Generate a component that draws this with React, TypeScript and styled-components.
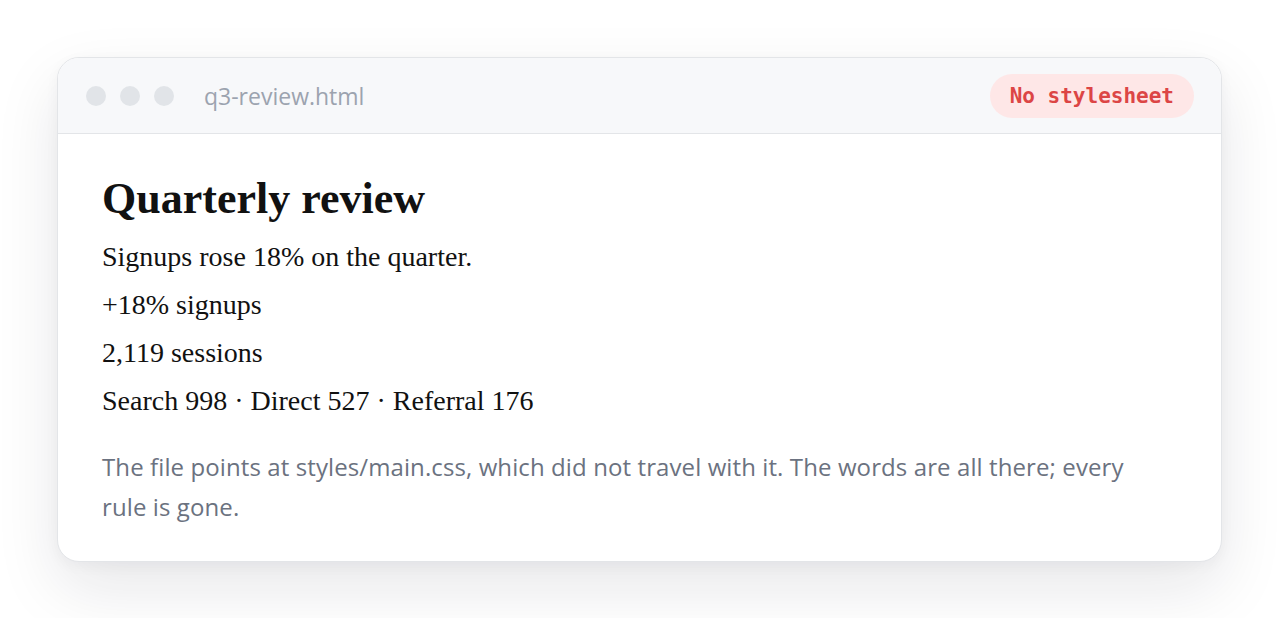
import React from "react";
import styled, { createGlobalStyle } from "styled-components";

const Global = createGlobalStyle`
  html, body { margin: 0; padding: 0; background: #ffffff; }
  body { width: 1280px; height: 618px; overflow: hidden; }
`;

const Stage = styled.div`
  padding: 57px 58px 57px 57px;
  box-sizing: border-box;
  width: 1280px;
  height: 618px;
`;

const Card = styled.div`
  border: 1px solid #e3e5e8;
  border-radius: 22px;
  background: #ffffff;
  overflow: hidden;
  box-shadow: 0 26px 64px rgba(17, 24, 39, 0.1), 0 4px 14px rgba(17, 24, 39, 0.04);
`;

const Bar = styled.div`
  display: flex;
  align-items: center;
  height: 75px;
  padding: 0 27px 0 28px;
  background: #f7f8fa;
  border-bottom: 1px solid #e3e5e8;
`;

const Dots = styled.div`
  display: flex;
  gap: 14px;
  margin-right: 30px;
`;

const Dot = styled.span`
  width: 20px;
  height: 20px;
  border-radius: 50%;
  background: #e1e4e8;
`;

const FileName = styled.span`
  font-family: "Open Sans", "Noto Sans", sans-serif;
  font-size: 23px;
  color: #9ca3af;
  flex: 1;
`;

const Badge = styled.span`
  font-family: "DejaVu Sans Mono", "Liberation Mono", monospace;
  font-weight: bold;
  font-size: 21px;
  color: #dc4545;
  background: #fee7e7;
  border-radius: 22px;
  height: 44px;
  display: flex;
  align-items: center;
  padding: 0 20px;
`;

const Body = styled.div`
  padding: 40px 45px 34px 44px;
  font-family: "Liberation Serif", "Times New Roman", serif;
  color: #111111;
`;

const Title = styled.h1`
  margin: 0 0 8px 0;
  font-size: 44px;
  font-weight: bold;
  line-height: 1.15;
`;

const Line = styled.p`
  margin: 0;
  font-size: 28px;
  line-height: 48px;
`;

const Note = styled.p`
  margin: 22px 0 0 0;
  max-width: 1050px;
  font-family: "Open Sans", "Noto Sans", sans-serif;
  font-size: 24px;
  letter-spacing: 0.1px;
  line-height: 40px;
  color: #6b7280;
`;

export default function App() {
  return (
    <>
      <Global />
      <Stage>
        <Card>
          <Bar>
            <Dots>
              <Dot />
              <Dot />
              <Dot />
            </Dots>
            <FileName>q3-review.html</FileName>
            <Badge>No stylesheet</Badge>
          </Bar>
          <Body>
            <Title>Quarterly review</Title>
            <Line>Signups rose 18% on the quarter.</Line>
            <Line>+18% signups</Line>
            <Line>2,119 sessions</Line>
            <Line>Search 998 · Direct 527 · Referral 176</Line>
            <Note>
              The file points at styles/main.css, which did not travel with it. The words are all there; every rule is gone.
            </Note>
          </Body>
        </Card>
      </Stage>
    </>
  );
}
